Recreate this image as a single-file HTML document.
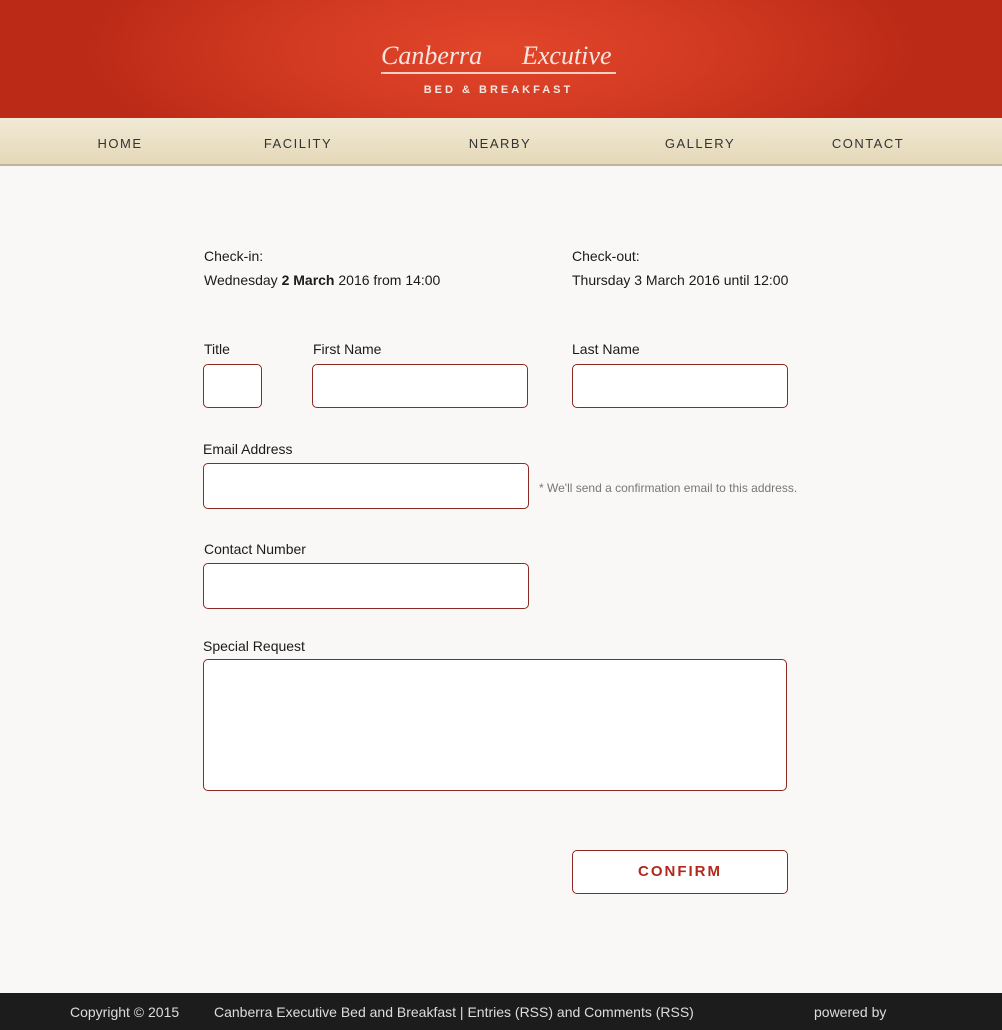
<!DOCTYPE html>
<html><head><meta charset="utf-8"><style>
*{box-sizing:border-box;margin:0;padding:0}
body{width:1002px;height:1030px;background:#f9f8f6;font-family:"Liberation Sans",Arial,sans-serif;position:relative;overflow:hidden;color:#1a1a1a}
.hdr{position:absolute;left:0;top:0;width:1002px;height:118px;background:radial-gradient(ellipse 420px 140px at 500px 50px,#e2462a 0%,#d23a22 50%,#bb2a17 100%)}
.logo1{position:absolute;top:41px;font-family:"Liberation Serif",serif;font-style:italic;font-size:26px;color:#f6e6df}
.line{position:absolute;left:381px;top:72px;width:235px;height:2px;background:#f0cfc3}
.bb{position:absolute;left:381px;top:84px;width:235px;text-align:center;font-size:11px;font-weight:bold;letter-spacing:3px;color:#f6e6df}
.nav{position:absolute;left:0;top:118px;width:1002px;height:48px;background:linear-gradient(#f2ead6,#e4d8b8);border-bottom:2px solid #bfb494}
.nav span{position:absolute;top:18px;font-size:13px;letter-spacing:1.5px;color:#333;transform:translateX(-50%)}
.t{position:absolute;font-size:14px;color:#1a1a1a}
.box{position:absolute;background:#fff;border:1px solid #8a2a22;border-radius:5px}
.foot{position:absolute;left:0;top:993px;width:1002px;height:37px;background:#1c1c1c;color:#ddd;font-size:14px}
.foot span{position:absolute;top:11px}
</style></head><body>
<div class="hdr">
<div class="logo1" style="left:381px">Canberra</div>
<div class="logo1" style="left:522px">Excutive</div>
<div class="line"></div>
<div class="bb">BED &amp; BREAKFAST</div>
</div>
<div class="nav">
<span style="left:120px">HOME</span><span style="left:298px">FACILITY</span><span style="left:500px">NEARBY</span><span style="left:700px">GALLERY</span><span style="left:868px">CONTACT</span>
</div>
<div class="t" style="left:204px;top:248px">Check-in:</div>
<div class="t" style="left:204px;top:272px">Wednesday <b>2 March</b> 2016 from 14:00</div>
<div class="t" style="left:572px;top:248px">Check-out:</div>
<div class="t" style="left:572px;top:272px">Thursday 3 March 2016 until 12:00</div>
<div class="t" style="left:204px;top:341px">Title</div>
<div class="t" style="left:313px;top:341px">First Name</div>
<div class="t" style="left:572px;top:341px">Last Name</div>
<div class="box" style="left:203px;top:364px;width:59px;height:44px"></div>
<div class="box" style="left:312px;top:364px;width:216px;height:44px"></div>
<div class="box" style="left:572px;top:364px;width:216px;height:44px"></div>
<div class="t" style="left:203px;top:441px">Email Address</div>
<div class="box" style="left:203px;top:463px;width:326px;height:46px"></div>
<div class="t" style="left:539px;top:481px;font-size:12px;color:#777">* We'll send a confirmation email to this address.</div>
<div class="t" style="left:204px;top:541px">Contact Number</div>
<div class="box" style="left:203px;top:563px;width:326px;height:46px"></div>
<div class="t" style="left:203px;top:638px">Special Request</div>
<div class="box" style="left:203px;top:659px;width:584px;height:132px"></div>
<div class="box" style="left:572px;top:850px;width:216px;height:44px;text-align:center;line-height:42px;color:#b02a1c;font-size:15px;font-weight:bold;letter-spacing:2px">CONFIRM</div>
<div class="foot"><span style="left:70px">Copyright © 2015</span><span style="left:214px">Canberra Executive Bed and Breakfast | Entries (RSS) and Comments (RSS)</span><span style="left:814px">powered by</span></div>
</body></html>
